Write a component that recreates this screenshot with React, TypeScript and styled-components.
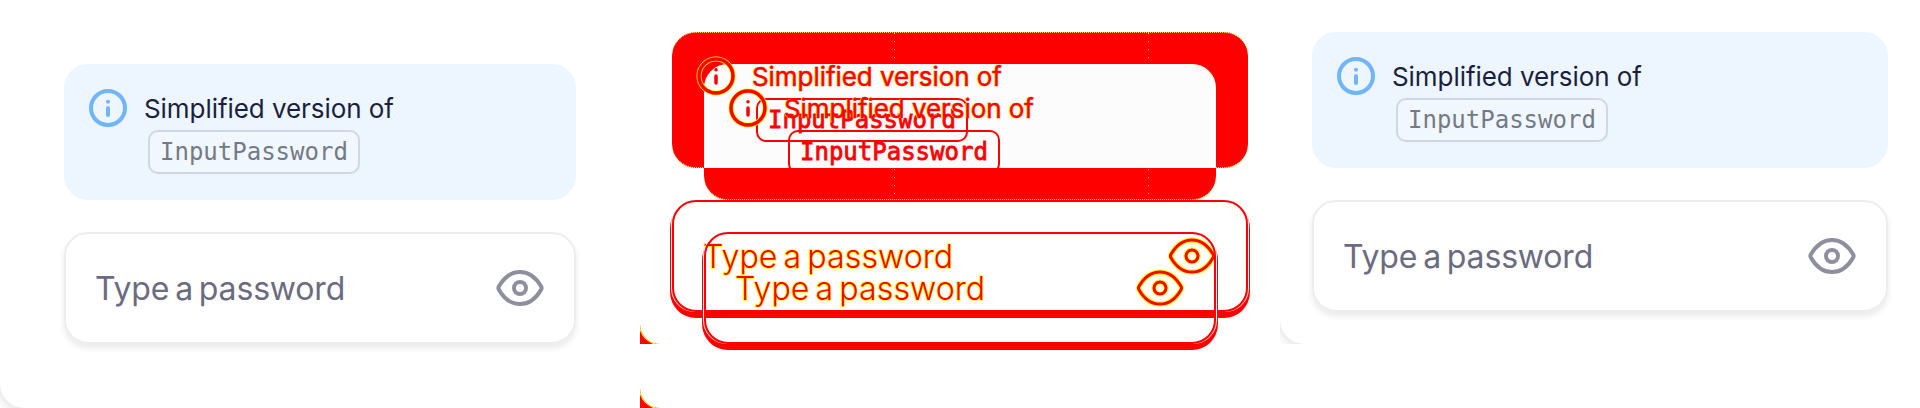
import React from "react";
import styled, { createGlobalStyle, css } from "styled-components";

const Global = createGlobalStyle`
  * { box-sizing: border-box; }
  body { margin: 0; background: #fff; font-family: Inter, "Liberation Sans", sans-serif; }
`;

const Page = styled.main`
  display: grid;
  grid-template-columns: repeat(3, 640px);
  width: 1920px;
  height: 408px;
  overflow: hidden;
`;

const Panel = styled.section<{ $h: number }>`
  position: relative;
  height: ${(p) => p.$h}px;
  overflow: hidden;
`;

const Surface = styled.div<{ $inset: number; $diff?: boolean }>`
  height: 100%;
  padding: ${(p) => p.$inset}px;
  display: flex;
  flex-direction: column;
  gap: 32px;
  border-bottom-left-radius: ${(p) => (p.$diff ? 20 : 24)}px;
  box-shadow: ${(p) => (p.$diff ? "0 0 0 1px #ff0, 0 0 0 20px #f00" : "0 0 0 2px #ededed, 0 4px 8px 2px rgba(0, 0, 0, 0.08)")};
`;

/* The comparison panel stacks both captures on one canvas. */
const Layer = styled.div<{ $h: number }>`
  position: absolute;
  inset: 0;
  height: ${(p) => p.$h}px;
  overflow: hidden;
`;

const Fill = styled.div<{ $inset: number }>`
  position: absolute;
  top: ${(p) => p.$inset}px;
  left: ${(p) => p.$inset}px;
  right: ${(p) => p.$inset}px;
  height: 136px;
  border: 1px dotted #ff0;
  border-width: 1px 0;
  border-radius: 24px;
  background:
    linear-gradient(#ff0 1px, transparent 1px) ${(p) => 254 - p.$inset}px 0 / 1px 8px repeat-y,
    linear-gradient(#ff0 1px, transparent 1px) ${(p) => 508 - p.$inset}px 0 / 1px 8px repeat-y,
    #f00;
`;

const Overlap = styled.div`
  position: absolute;
  top: 64px;
  left: 64px;
  right: 64px;
  height: 104px;
  border-radius: 0 24px 0 0;
  border-top-left-radius: 24px;
  background: #fcfcfc;
`;

const Alert = styled.div<{ $diff?: boolean }>`
  display: flex;
  flex: none;
  gap: 16px;
  height: 136px;
  padding: 24px;
  border-radius: 24px;
  background: ${(p) => (p.$diff ? "transparent" : "#edf6ff")};
`;

const Message = styled.div`
  display: flex;
  flex-direction: column;
  align-items: flex-start;
`;

const Title = styled.div<{ $diff?: boolean }>`
  height: 42px;
  line-height: 41px;
  font-size: 26px;
  letter-spacing: -0.06px;
  white-space: nowrap;
  color: #1b1f3f;
  ${(p) =>
    p.$diff &&
    css`
      color: #f00;
      -webkit-text-stroke: 0.5px #f00;
      text-shadow: -1px 0 #ff0;
    `}
`;

const Code = styled.code<{ $diff?: boolean }>`
  height: 44px;
  margin-left: 4px;
  padding: 0 10px;
  border: 2px solid ${(p) => (p.$diff ? "#f00" : "#d0d7e2")};
  border-radius: 10px;
  background: ${(p) => (p.$diff ? "transparent" : "#f0f7ff")};
  color: ${(p) => (p.$diff ? "#f00" : "#737a86")};
  font: 24px/40px "DejaVu Sans Mono", monospace;
  ${(p) => p.$diff && "-webkit-text-stroke: 0.8px #f00;"}
`;

const Field = styled.div<{ $diff?: boolean }>`
  display: flex;
  flex: none;
  align-items: center;
  justify-content: space-between;
  height: 112px;
  padding: 0 30px 0 29px;
  border: 2px solid ${(p) => (p.$diff ? "#f00" : "#ededed")};
  border-radius: 24px;
  box-shadow: ${(p) => (p.$diff ? "1px 0 0 #fff, -1px 0 0 #fff, 0 4px 0 2px #f00" : "0 4px 6px rgba(0, 0, 0, 0.09)")};
`;

const Placeholder = styled.span<{ $diff?: boolean }>`
  padding-top: 2px;
  font-size: 32px;
  line-height: 44px;
  letter-spacing: -0.15px;
  word-spacing: -3px;
  white-space: nowrap;
  color: #6b6b80;
  ${(p) =>
    p.$diff &&
    css`
      color: #f00;
      font-weight: 300;
      letter-spacing: 0.12px;
      paint-order: stroke;
      -webkit-text-stroke: 1.5px #ff0;
    `}
`;

const Icon = styled.svg`
  display: block;
  flex: none;
`;

type Props = { diff?: boolean };

const Info = ({ diff }: Props) => (
  <Icon width="40" height="40" viewBox="0 0 40 40" fill="none">
    {diff && <circle cx="20" cy="20" r="17" stroke="#ff0" strokeWidth="5" />}
    <g stroke={diff ? "#f00" : "#70b5fa"} strokeWidth={diff ? 3.5 : 4} strokeLinecap="round">
      <circle cx="20" cy="20" r="17" />
      <path d="M20 20v7M20 13.7v.01" />
    </g>
  </Icon>
);

const EyeShape = () => (
  <>
    <path d="M2.8 25.4Q2 24 2.8 22.6C8 13.5 15.5 8 24 8s16 5.500 21.200 14.600Q46 24 45.200 25.400C40 34.500 32.500 40 24 40S8 34.500 2.800 25.400Z" />
    <circle cx="24" cy="24" r="6" />
  </>
);

const Eye = ({ diff }: Props) => (
  <Icon width="48" height="48" viewBox="0 0 48 48" fill="none">
    {diff && (
      <g stroke="#ff0" strokeWidth="5">
        <EyeShape />
      </g>
    )}
    <g stroke={diff ? "#f00" : "#8e8e9f"} strokeWidth={diff ? 3 : 4}>
      <EyeShape />
    </g>
  </Icon>
);

const Form = ({ diff }: Props) => (
  <>
    <Alert $diff={diff}>
      <Info diff={diff} />
      <Message>
        <Title $diff={diff}>Simplified version of</Title>
        <Code $diff={diff}>InputPassword</Code>
      </Message>
    </Alert>
    <Field $diff={diff}>
      <Placeholder $diff={diff}>Type a password</Placeholder>
      <Eye diff={diff} />
    </Field>
  </>
);

export default function App() {
  return (
    <>
      <Global />
      <Page>
        <Panel $h={408}>
          <Surface $inset={64}><Form /></Surface>
        </Panel>
        <Panel $h={408}>
          <Fill $inset={32} />
          <Fill $inset={64} />
          <Overlap />
          <Layer $h={344}>
            <Surface $inset={32} $diff><Form diff /></Surface>
          </Layer>
          <Layer $h={408}>
            <Surface $inset={64} $diff><Form diff /></Surface>
          </Layer>
        </Panel>
        <Panel $h={344}>
          <Surface $inset={32}><Form /></Surface>
        </Panel>
      </Page>
    </>
  );
}
